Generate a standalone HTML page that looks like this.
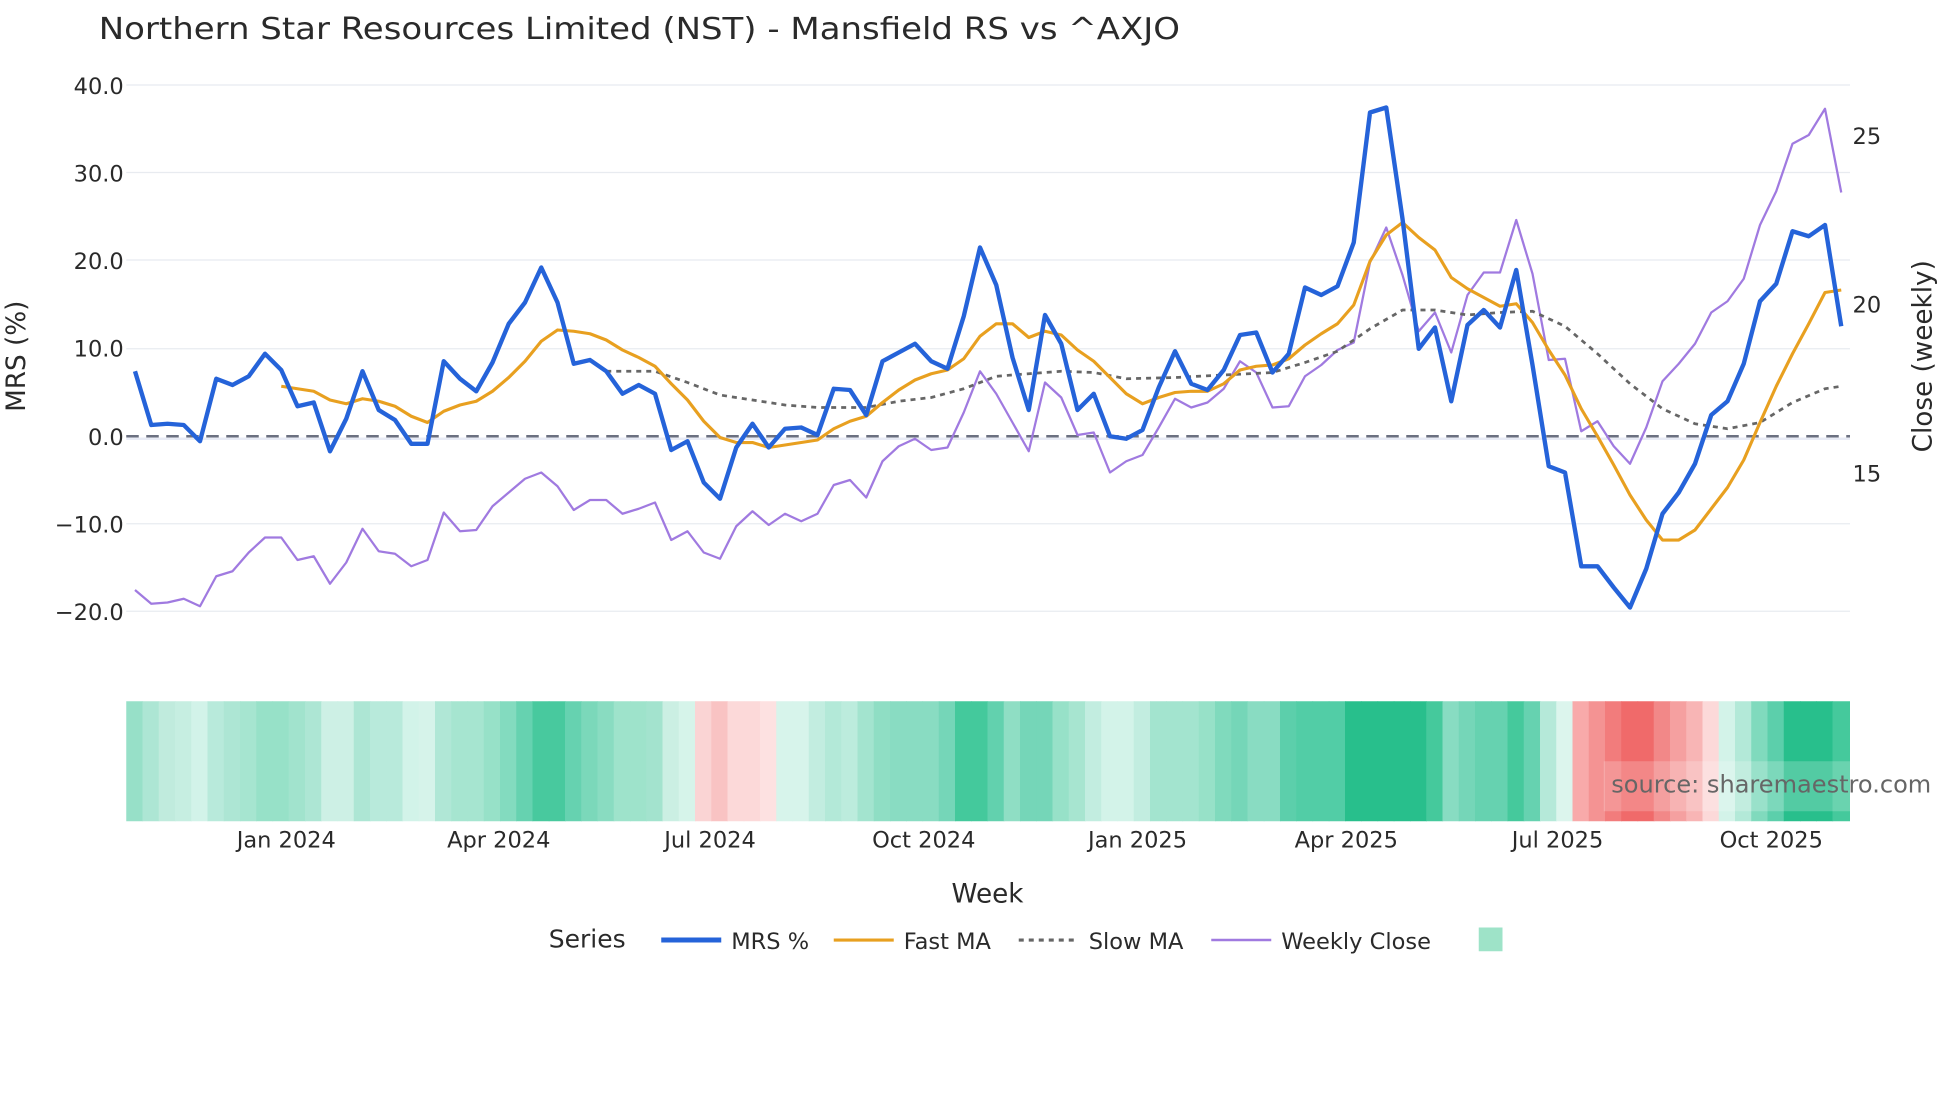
<!DOCTYPE html>
<html><head><meta charset="utf-8"><style>
html,body{margin:0;padding:0;background:#fff;}
svg{display:block;font-family:"DejaVu Sans","Liberation Sans",sans-serif;}
</style></head><body>
<svg id="s" width="1960" height="1102" viewBox="0 0 1568 881.6" xmlns="http://www.w3.org/2000/svg">
<rect width="1568" height="882" fill="#fff"/>
<text x="79" y="31" font-size="24" fill="#2a2a2a" textLength="865" lengthAdjust="spacingAndGlyphs">Northern Star Resources Limited (NST) - Mansfield RS vs ^AXJO</text>
<g stroke="#e8ebf0" stroke-width="1">
<line x1="101" x2="1480" y1="68" y2="68"/><line x1="101" x2="1480" y1="138" y2="138"/>
<line x1="101" x2="1480" y1="208" y2="208"/><line x1="101" x2="1480" y1="279" y2="279"/>
<line x1="101" x2="1480" y1="419" y2="419"/><line x1="101" x2="1480" y1="489" y2="489"/>
</g>
<line x1="101" x2="1480" y1="351" y2="351" stroke="#e8ebf5" stroke-width="2"/>
<g font-size="18" fill="#2a2a2a" text-anchor="end">
<text x="99" y="75">40.0</text><text x="99" y="145">30.0</text><text x="99" y="215">20.0</text>
<text x="99" y="285">10.0</text><text x="99" y="356">0.0</text><text x="99" y="426">−10.0</text><text x="99" y="496">−20.0</text>
</g>
<g font-size="18" fill="#2a2a2a">
<text x="1482" y="115">25</text><text x="1482" y="250">20</text><text x="1482" y="385">15</text>
</g>
<text transform="translate(20,285) rotate(-90)" font-size="21" fill="#2a2a2a" text-anchor="middle">MRS (%)</text>
<text transform="translate(1545,285) rotate(-90)" font-size="21" fill="#2a2a2a" text-anchor="middle">Close (weekly)</text>
<g id="heat"></g>
<rect x="1283" y="609" width="197" height="40" fill="#fff" opacity="0.2"/>
<text x="1289" y="634" font-size="19" fill="#666" textLength="256" lengthAdjust="spacingAndGlyphs">source: sharemaestro.com</text>
<g font-size="18" fill="#2a2a2a" text-anchor="middle">
<text x="229" y="678">Jan 2024</text><text x="399" y="678">Apr 2024</text><text x="568" y="678">Jul 2024</text>
<text x="739" y="678">Oct 2024</text><text x="910" y="678">Jan 2025</text><text x="1077" y="678">Apr 2025</text>
<text x="1246" y="678">Jul 2025</text><text x="1417" y="678">Oct 2025</text>
</g>
<text x="790" y="722" font-size="21" fill="#2a2a2a" text-anchor="middle">Week</text>
<line x1="101" x2="1480" y1="349" y2="349" stroke="#6b7080" stroke-width="2" stroke-dasharray="10,6"/>
<g id="lines" fill="none" stroke-linejoin="round"></g>
<g font-size="18" fill="#2a2a2a">
<text x="439" y="758" font-size="20">Series</text>
<line x1="529" x2="577" y1="752" y2="752" stroke="#2563d9" stroke-width="4"/>
<text x="585" y="759">MRS %</text>
<line x1="667" x2="715" y1="752" y2="752" stroke="#e8a020" stroke-width="2.5"/>
<text x="723" y="759">Fast MA</text>
<line x1="815" x2="863" y1="752" y2="752" stroke="#666" stroke-width="2.5" stroke-dasharray="4,4"/>
<text x="871" y="759">Slow MA</text>
<line x1="969" x2="1017" y1="752" y2="752" stroke="#a07ae0" stroke-width="2"/>
<text x="1025" y="759">Weekly Close</text>
<rect x="1183" y="742" width="19" height="19" fill="#9ee3c8"/>
</g>
</svg>
<script>
var blue=[297,340,339,340,353,303,308,301,283,296,325,322,361,335,297,328,336,355,355,289,303,313,290,259,242,214,242,291,288,297,315,308,315,360,353,386,399,358,339,358,343,342,348,311,312,332,289,282,275,289,295,253,198,228,286,328,252,275,328,315,349,351,344,310,281,307,312,296,268,266,298,283,230,236,229,194,90,86,175,279,262,321,260,248,262,216,292,373,378,453,453,470,486,455,411,394,371,332,321,291,241,227,185,189,180,261];
var purple=[472,483,482,479,485,461,457,442,430,430,448,445,467,450,423,441,443,453,448,410,425,424,405,394,383,378,389,408,400,400,411,407,402,432,425,442,447,421,409,420,411,417,411,388,384,398,369,357,351,360,358,330,297,315,338,361,306,318,348,346,378,369,364,342,319,326,322,311,289,298,326,325,301,292,280,274,210,182,220,265,250,282,236,218,218,176,219,288,287,345,337,357,371,342,305,291,275,250,241,223,180,153,115,108,87,154];
var orange=[309,311,313,320,323,319,321,325,333,338,329,324,321,313,302,289,273,264,265,267,272,280,286,293,307,320,337,350,354,354,358,356,354,352,343,337,333,322,312,304,299,296,287,269,259,259,270,265,268,280,289,302,315,323,318,314,313,313,307,296,293,292,287,276,267,259,244,209,188,178,190,200,222,231,238,245,243,258,280,300,327,349,372,396,416,432,432,424,407,390,368,338,309,283,259,234,232];
var slow=[[485,297],[511,297],[524,297],[550,306],[576,316],[602,320],[628,324],[654,326],[693,326],[719,321],[745,318],[771,311],[797,301],[823,299],[849,297],[875,298],[901,303],[940,302],[979,300],[1018,298],[1044,290],[1070,281],[1096,263],[1122,248],[1148,248],[1174,252],[1200,250],[1226,249],[1252,261],[1278,283],[1304,307],[1330,327],[1356,339],[1382,343],[1408,338],[1434,322],[1460,311],[1473,309]];
var heat=["#97e0c8","#ade6d4","#c0ebdd","#c6eee1","#d2f3e9","#b8eadb","#ade6d4","#a6e5d0","#97e1c8","#97e1c8","#a1e3cd","#ade6d4","#cdf0e5","#cdf0e5","#ade6d4","#b8eadb","#b8eadb","#d2f3e9","#d6f3ea","#b0e7d6","#a6e5d0","#a6e5d0","#97e1c8","#83dbbf","#66d2b0","#48c99e","#48c99e","#66d2b0","#7bd8ba","#89dcc1","#9ee3cb","#9ee3cb","#a3e3ce","#cbefe3","#d6f4ea","#fad4d4","#f9c3c3","#fcd9d9","#fcd9d9","#fde1e1","#d7f4eb","#d7f4eb","#c2ede0","#b3e9d8","#bcecdd","#a3e4cf","#8fdec4","#89dcc2","#89dcc2","#89dcc2","#75d6b8","#44c99c","#44c99c","#62d1ae","#8fdec4","#75d6b8","#75d6b8","#97e1c8","#a7e5d0","#c2ede0","#d3f3e9","#d3f3e9","#c2ede0","#a3e4cf","#a3e4cf","#a3e4cf","#97e1c8","#80dabd","#75d6b8","#89dcc2","#89dcc2","#5ccfab","#52cda6","#52cda6","#52cda6","#28bf8c","#28bf8c","#28bf8c","#28bf8c","#28bf8c","#45c99c","#88dcc2","#75d6b8","#66d2b0","#66d2b0","#45c99c","#66d2b0","#b5e9d9","#dcf5ed","#f8aaaa","#f49393","#f27c7c","#f06a6a","#f06a6a","#f28888","#f5a0a0","#f8b5b5","#fcd9d9","#d3f3e9","#b3e9d8","#80dabd","#5ccfab","#28bf8c","#28bf8c","#28bf8c","#45c99c"];
function pts(a,start){return a.map(function(y,i){return (start+13*i)+","+y}).join(" ");}
var L=document.getElementById("lines"),ns="http://www.w3.org/2000/svg";
function pl(p,c,w,d){var e=document.createElementNS(ns,"polyline");e.setAttribute("points",p);e.setAttribute("stroke",c);e.setAttribute("stroke-width",w);if(d)e.setAttribute("stroke-dasharray",d);L.appendChild(e);}
pl(pts(purple,108),"#a07ae0",1.8);
pl(slow.map(function(p){return p.join(",")}).join(" "),"#666",2.2,"4,4");
pl(pts(orange,225),"#e8a020",2.5);
pl(pts(blue,108),"#2563d9",3.5);
var H=document.getElementById("heat");
for(var i=0;i<heat.length;i++){
 var r=document.createElementNS(ns,"rect");var x=101+13*i;var w=(i==heat.length-1)?1480-x:13.5;
 r.setAttribute("x",x);r.setAttribute("y",561);r.setAttribute("width",w);r.setAttribute("height",96);r.setAttribute("fill",heat[i]);H.appendChild(r);
}
</script>
</body></html>
